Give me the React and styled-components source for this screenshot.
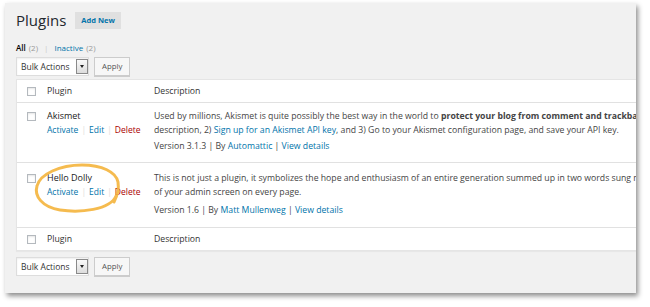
import React from 'react'
import styled, { createGlobalStyle } from 'styled-components'

const Global = createGlobalStyle`
  html, body {
    margin: 0;
    padding: 0;
    background: #ffffff;
  }
  body {
    font-family: "Open Sans", "Noto Sans", sans-serif;
    color: #444;
  }
`

const Page = styled.div`
  padding: 3px 0 0 5px;
  width: 650px;
  height: 307px;
  box-sizing: border-box;
`

const Window = styled.div`
  position: relative;
  width: 631px;
  height: 290px;
  box-sizing: border-box;
  padding: 8px 0 0 11px;
  background: #f1f1f1;
  overflow: hidden;
  box-shadow: 2px 3px 5px rgba(0, 0, 0, 0.45);
`

const TitleRow = styled.div`
  display: flex;
  align-items: center;
  gap: 9px;
  height: 18px;
`

const Title = styled.h1`
  margin: 0;
  font-size: 15px;
  font-weight: 400;
  color: #23282d;
  line-height: 18px;
`

const AddNew = styled.span`
  display: inline-block;
  background: #e0e0e0;
  color: #0073aa;
  font-size: 7.5px;
  font-weight: 700;
  padding: 0 6px;
  line-height: 17px;
`

const Views = styled.div`
  margin-top: 14px;
  font-size: 8px;
  line-height: 10px;
  color: #666;
  display: flex;
  align-items: center;
  gap: 3px;
`

const Current = styled.span`
  color: #000;
  font-weight: 600;
`

const Count = styled.span`
  color: #999;
`

const Sep = styled.span`
  color: #ccc;
  margin: 0 3px;
`

const Nav = styled.div`
  display: flex;
  align-items: center;
  gap: 5px;
  margin-top: ${p => p.top}px;
`

const Select = styled.div`
  display: flex;
  align-items: stretch;
  height: 17px;
  background: #fff;
  border: 1px solid #ddd;
  box-shadow: inset 0 1px 2px rgba(0, 0, 0, 0.07);
`

const SelectText = styled.span`
  font-size: 8.5px;
  color: #333;
  padding: 0 4px;
  width: 51px;
  line-height: 17px;
`

const Arrow = styled.span`
  width: 10px;
  border: 1px solid #8a8a8a;
  background: linear-gradient(#fafafa, #dcdcdc);
  display: flex;
  align-items: center;
  justify-content: center;
  margin: 1px 0;
  &::after {
    content: '';
    border-left: 2.5px solid transparent;
    border-right: 2.5px solid transparent;
    border-top: 3px solid #222;
  }
`

const Button = styled.span`
  display: inline-block;
  height: 17px;
  line-height: 17px;
  padding: 0 7px;
  font-size: 7.8px;
  color: #555;
  background: #f7f7f7;
  border: 1px solid #ccc;
  box-shadow: 0 1px 0 #ccc;
`

const Table = styled.div`
  margin-top: 3px;
  width: 720px;
  background: #fff;
  border: 1px solid #e5e5e5;
  box-shadow: 0 1px 1px rgba(0, 0, 0, 0.04);
`

const Row = styled.div`
  display: grid;
  grid-template-columns: 30px 107px 1fr;
  align-items: ${p => (p.head ? 'center' : 'start')};
  height: ${p => (p.head ? '22px' : 'auto')};
  padding: ${p => (p.head ? '0' : `${p.pt}px 0 ${p.pb}px`)};
  border-top: ${p => (p.first ? 'none' : '1px solid #e1e1e1')};
  font-size: 8.7px;
  line-height: 14px;
  color: #444;
`

const HeadCell = styled.span`
  font-size: 8.7px;
  color: #333;
`

const Check = styled.span`
  display: block;
  width: 7px;
  height: 7px;
  margin-left: 10px;
  margin-top: ${p => (p.head ? '0' : '2.5px')};
  border: 1px solid #b4b9be;
  background: #fff;
  box-shadow: inset 0 1px 2px rgba(0, 0, 0, 0.1);
`

const Name = styled.div`
  font-size: 9px;
  color: #222;
`

const Actions = styled.div`
  font-size: 8.5px;
`

const Link = styled.span`
  color: ${p => (p.danger ? '#a00' : '#0073aa')};
`

const Pipe = styled.span`
  color: #ddd;
  margin: 0 3px;
`

const Desc = styled.div`
  white-space: nowrap;
`

const Meta = styled.div`
  margin-top: ${p => p.gap}px;
  white-space: nowrap;
`

const Circle = styled.svg`
  position: absolute;
  left: 25px;
  top: 157px;
  pointer-events: none;
`

function PluginRow({ name, pt, pb, gap, desc, meta }) {
  return (
    <Row pt={pt} pb={pb}>
      <Check />
      <div>
        <Name>{name}</Name>
        <Actions>
          <Link>Activate</Link>
          <Pipe>|</Pipe>
          <Link>Edit</Link>
          <Pipe>|</Pipe>
          <Link danger>Delete</Link>
        </Actions>
      </div>
      <div>
        <Desc>{desc}</Desc>
        <Meta gap={gap}>{meta}</Meta>
      </div>
    </Row>
  )
}

export default function App() {
  return (
    <Page>
      <Global />
      <Window>
        <TitleRow>
          <Title>Plugins</Title>
          <AddNew>Add New</AddNew>
        </TitleRow>
        <Views>
          <Current>All</Current>
          <Count>(2)</Count>
          <Sep>|</Sep>
          <Link>Inactive</Link>
          <Count>(2)</Count>
        </Views>
        <Nav top={4}>
          <Select>
            <SelectText>Bulk Actions</SelectText>
            <Arrow />
          </Select>
          <Button>Apply</Button>
        </Nav>
        <Table>
          <Row head first>
            <Check head />
            <HeadCell>Plugin</HeadCell>
            <HeadCell>Description</HeadCell>
          </Row>
          <PluginRow
            name="Akismet"
            pt={6}
            pb={9}
            gap={2}
            desc={
              <>
                Used by millions, Akismet is quite possibly the best way in the world to{' '}
                <b>protect your blog from comment and trackback spam</b>. It keeps your site protected even
                while you sleep. To get started: 1) Click the “Activate” link to the left of this
                <br />
                description, 2) <Link>Sign up for an Akismet API key</Link>, and 3) Go to your Akismet
                configuration page, and save your API key.
              </>
            }
            meta={
              <>
                Version 3.1.3 | By <Link>Automattic</Link> | <Link>View details</Link>
              </>
            }
          />
          <PluginRow
            name="Hello Dolly"
            pt={8}
            pb={10}
            gap={4}
            desc={
              <>
                This is not just a plugin, it symbolizes the hope and enthusiasm of an entire generation
                summed up in two words sung most famously by Louis Armstrong: Hello, Dolly.
                <br />
                of your admin screen on every page.
              </>
            }
            meta={
              <>
                Version 1.6 | By <Link>Matt Mullenweg</Link> | <Link>View details</Link>
              </>
            }
          />
          <Row head>
            <Check head />
            <HeadCell>Plugin</HeadCell>
            <HeadCell>Description</HeadCell>
          </Row>
        </Table>
        <Nav top={6}>
          <Select>
            <SelectText>Bulk Actions</SelectText>
            <Arrow />
          </Select>
          <Button>Apply</Button>
        </Nav>
        <Circle width="100" height="60" viewBox="0 0 100 60">
          <path
            d="M86 36 C80 50, 50 53, 30 50 C12 47, 4 36, 7 26 C10 14, 30 5, 52 5 C72 5, 86 12, 88 22 C89 28, 88 34, 84 42"
            fill="none"
            stroke="#f4b43c"
            strokeWidth="3"
            strokeLinecap="round"
            opacity="0.9"
          />
        </Circle>
      </Window>
    </Page>
  )
}
